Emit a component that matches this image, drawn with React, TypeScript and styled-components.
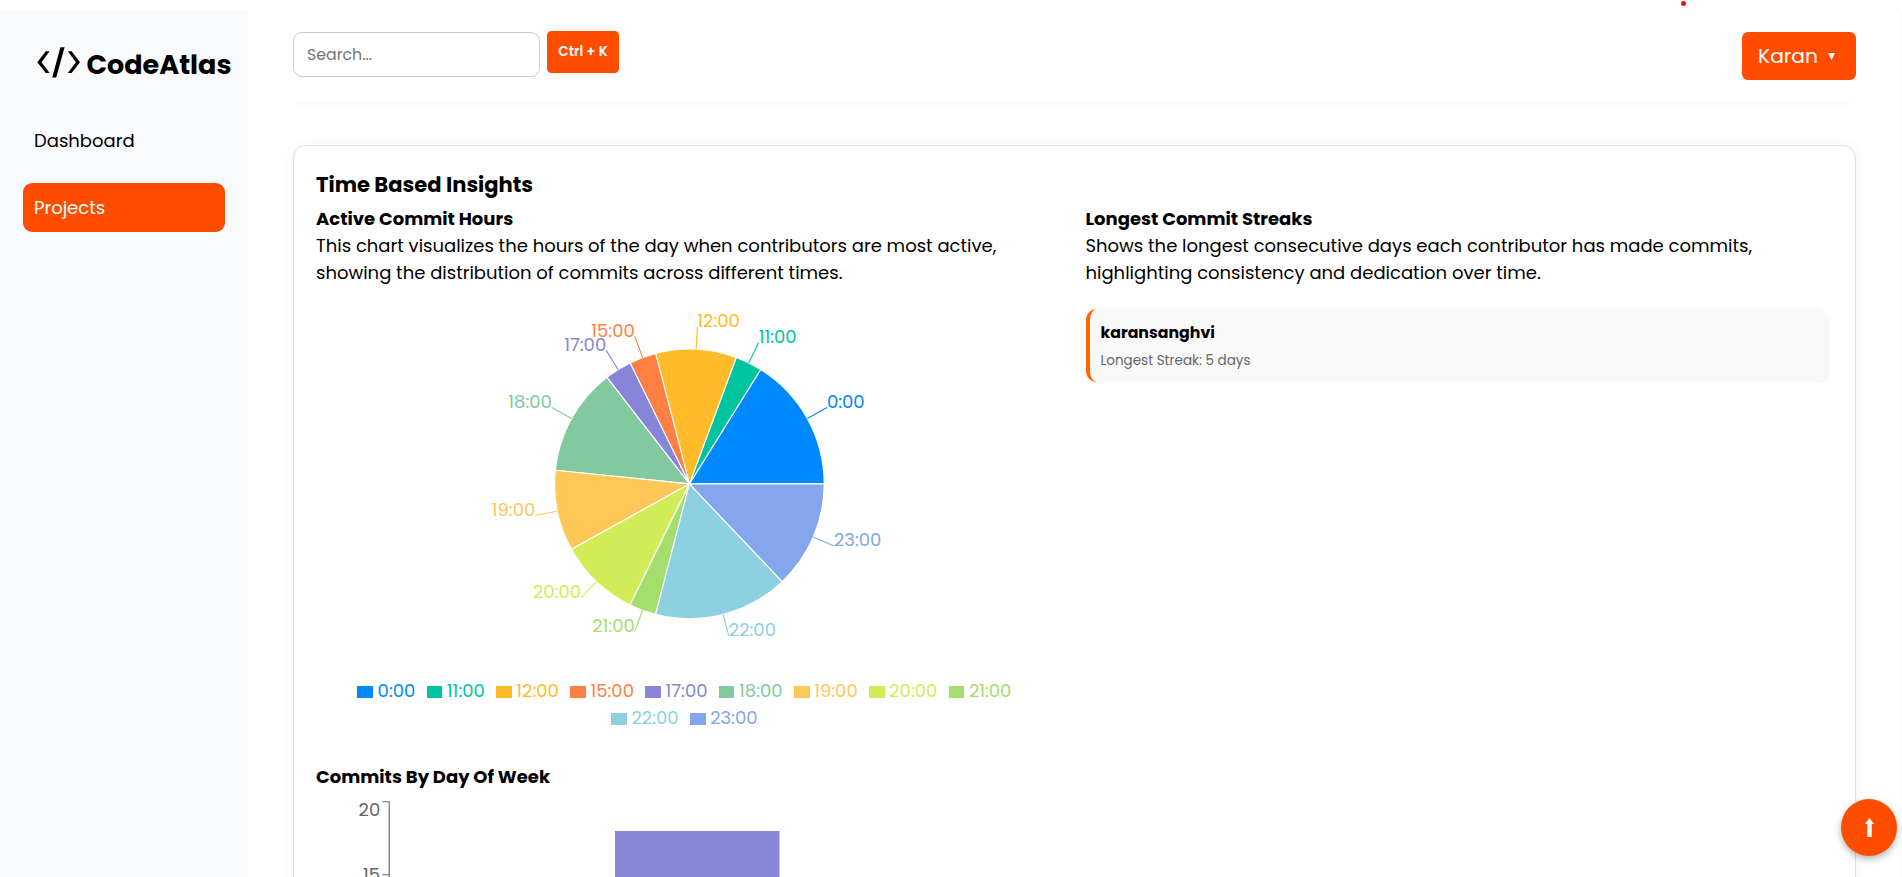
import React from "react";
import styled, { createGlobalStyle } from "styled-components";

const ACCENT = "#ff4d00";
const FONT = `"Poppins", "Inter", "Open Sans", sans-serif`;

const GlobalStyle = createGlobalStyle`
  * { box-sizing: border-box; margin: 0; padding: 0; }
  html, body { background: #fff; }
  body {
    height: 877px;
    overflow: hidden;
    font-family: ${FONT};
    font-size: 18px;
    line-height: 27px;
    color: #000;
  }
`;

const Shell = styled.div`
  display: flex;
  height: 877px;
  padding-top: 10px;
  overflow: hidden;
`;

const Sidebar = styled.aside`
  flex: none;
  width: 248px;
  background: #f9fafc;
  padding: 32px 0 0 23px;
`;

const Brand = styled.div`
  display: flex;
  height: 72px;
  margin-left: 14px;
`;

const BrandMark = styled.svg`
  flex: none;
  width: 44px;
  height: 32px;
  margin-top: 5px;
`;

const BrandName = styled.span`
  margin: 2px 0 0 5.5px;
  font-size: 27px;
  font-weight: 700;
  line-height: 42px;
`;

const Nav = styled.nav`
  display: flex;
  flex-direction: column;
  gap: 18px;
  margin-top: 2px;
`;

const NavItem = styled.a<{ $active?: boolean }>`
  display: block;
  width: 202px;
  height: 49px;
  padding: 0 11px;
  line-height: 49px;
  border-radius: 9px;
  color: ${(p) => (p.$active ? "#fff" : "#000")};
  background: ${(p) => (p.$active ? ACCENT : "transparent")};
`;

const Main = styled.main`
  flex: 1;
  min-width: 0;
  display: flex;
  flex-direction: column;
  padding: 0 45px;
  border-right: 1px solid #fafafa;
`;

const TopBar = styled.header`
  display: flex;
  align-items: flex-start;
  height: 92px;
  flex: none;
  padding-top: 20px;
  box-shadow: 0 6px 7px -6px rgba(0, 0, 0, 0.07);
`;

const SearchInput = styled.input`
  width: 247px;
  height: 45px;
  margin-top: 2px;
  padding: 0 13px;
  border: 1px solid #ccc;
  border-radius: 9px;
  font: 15.75px ${FONT};
  outline: none;
  &::placeholder { color: #757575; }
`;

const Shortcut = styled.kbd`
  width: 72px;
  height: 42.5px;
  margin: 0.5px 0 0 7px;
  border-radius: 4.5px;
  background: ${ACCENT};
  color: #fff;
  font: 600 13.5px/42px ${FONT};
  text-align: center;
`;

const UserButton = styled.button`
  display: flex;
  align-items: center;
  gap: 10px;
  width: 114px;
  height: 48px;
  margin: 2px 0 0 auto;
  padding: 0 0 0 16px;
  border: 0;
  border-radius: 6px;
  background: ${ACCENT};
  color: #fff;
  font: 20.25px/48px ${FONT};
`;

const Caret = styled.svg`
  width: 7px;
  height: 7px;
  margin-top: 1px;
`;

const Panel = styled.section`
  flex: none;
  height: 900px;
  margin-top: 43px;
  padding: 22px;
  border: 1px solid #e0e0e0;
  border-radius: 13px;
  background: #fff;
  box-shadow: 0 0 14px rgba(0, 0, 0, 0.045);
`;

const PanelTitle = styled.h2`
  height: 37px;
  font-size: 21.06px;
  line-height: 33px;
`;

const Columns = styled.div`
  display: grid;
  grid-template-columns: 747px 747px;
  gap: 22.5px;
`;

const Column = styled.div`
  display: flex;
  flex-direction: column;
`;

const Heading = styled.h3`
  font-size: 18px;
`;

const Blurb = styled.p`
  white-space: nowrap;
`;

const PieCanvas = styled.svg`
  display: block;
  width: 747px;
  height: 391px;
  overflow: visible;
`;

const Legend = styled.ul`
  display: flex;
  flex-wrap: wrap;
  justify-content: center;
  width: 720px;
  margin: 0 0 32px 14px;
  list-style: none;
`;

const LegendItem = styled.li<{ $color: string }>`
  display: flex;
  align-items: center;
  height: 27px;
  margin-right: 11.25px;
  color: ${(p) => p.$color};
  white-space: nowrap;
`;

const Swatch = styled.span`
  flex: none;
  width: 15.7px;
  height: 12px;
  margin: 3px 4.6px 0 0;
  background: currentColor;
`;

const BarCanvas = styled.svg`
  display: block;
  width: 747px;
  height: 240px;
`;

const StreakList = styled.div`
  height: 96px;
  padding: 23px 5.5px 0 0;
  overflow: hidden;
`;

const StreakCard = styled.article`
  height: 73px;
  padding: 12px 11px 0;
  border-left: 4px solid #ff6600;
  border-radius: 11px;
  background: #f9f9f9;
  box-shadow: 0 2px 6px rgba(0, 0, 0, 0.08);
`;

const StreakName = styled.h4`
  font-size: 15.75px;
  line-height: 24px;
`;

const StreakValue = styled.p`
  margin-top: 5px;
  font-size: 13.5px;
  line-height: 22px;
  color: #666;
`;

const ScrollTop = styled.button`
  position: fixed;
  right: 5px;
  bottom: 21px;
  display: grid;
  place-items: center;
  width: 56px;
  height: 57px;
  border: 0;
  border-radius: 50%;
  background: ${ACCENT};
  box-shadow: 0 3px 7px rgba(0, 0, 0, 0.3);
`;

const RecordDot = styled.span`
  position: fixed;
  top: 1px;
  left: 1680.5px;
  width: 5px;
  height: 5px;
  border-radius: 50%;
  background: #e8141c;
`;

type Hour = { label: string; commits: number; color: string };

const hours: Hour[] = [
  { label: "0:00", commits: 5, color: "#0088FE" },
  { label: "11:00", commits: 1, color: "#00C49F" },
  { label: "12:00", commits: 3, color: "#FFBB28" },
  { label: "15:00", commits: 1, color: "#FF8042" },
  { label: "17:00", commits: 1, color: "#8884D8" },
  { label: "18:00", commits: 4, color: "#82CA9D" },
  { label: "19:00", commits: 3, color: "#FFC658" },
  { label: "20:00", commits: 3, color: "#D0ED57" },
  { label: "21:00", commits: 1, color: "#A4DE6C" },
  { label: "22:00", commits: 5, color: "#8DD1E1" },
  { label: "23:00", commits: 4, color: "#83A6ED" },
];

const CX = 373.4;
const CY = 197.9;
const R = 134.8;
const LABEL_R = 157.3;

const point = (deg: number, r: number) => {
  const a = (deg * Math.PI) / 180;
  return [CX + r * Math.cos(a), CY - r * Math.sin(a)];
};

function HoursPie() {
  const total = hours.reduce((sum, h) => sum + h.commits, 0);
  let cursor = 0;
  const slices = hours.map((h) => {
    const start = cursor;
    cursor += (h.commits / total) * 360;
    return { ...h, start, end: cursor, mid: (start + cursor) / 2 };
  });
  return (
    <PieCanvas viewBox="0 0 747 391">
      {slices.map((s) => {
        const [x1, y1] = point(s.start, R);
        const [x2, y2] = point(s.end, R);
        return (
          <path
            key={s.label}
            d={`M${CX} ${CY}L${x1} ${y1}A${R} ${R} 0 0 0 ${x2} ${y2}Z`}
            fill={s.color}
            stroke="#fff"
            strokeWidth="1.125"
          />
        );
      })}
      {slices.map((s) => {
        const [x1, y1] = point(s.mid, R);
        const [x2, y2] = point(s.mid, LABEL_R);
        return (
          <g key={s.label}>
            <line x1={x1} y1={y1} x2={x2} y2={y2} stroke={s.color} strokeWidth="1.125" />
            <text
              x={x2}
              y={y2 + 0.3}
              fill={s.color}
              fontSize="18"
              textAnchor={x2 > CX ? "start" : "end"}
            >
              {s.label}
            </text>
          </g>
        );
      })}
    </PieCanvas>
  );
}

function WeekdayBars() {
  return (
    <BarCanvas viewBox="0 0 747 240">
      <path d="M66.5 11.8H73.2V240M66.5 84.8H73.2" fill="none" stroke="#666" strokeWidth="1.125" />
      <g fill="#666" fontSize="18" textAnchor="end">
        <text x="64.2" y="26">20</text>
        <text x="64.2" y="91.2">15</text>
      </g>
      <rect x="299" y="41" width="164.5" height="199" fill="#8884d8" />
    </BarCanvas>
  );
}

export default function App() {
  return (
    <>
      <GlobalStyle />
      <Shell>
        <Sidebar>
          <Brand>
            <BrandMark viewBox="0 0 44 32">
              <path d="M8.8 4.2H12.6L4.5 15.2L12.6 26H8.8L.3 15.2Z" />
              <path d="M34.6 4.2H30.8L38.9 15.2L30.8 26H34.6L43 15.2Z" />
              <path d="M23.4 .3H27.6L19.2 30.4H15.2Z" />
            </BrandMark>
            <BrandName>CodeAtlas</BrandName>
          </Brand>
          <Nav>
            <NavItem>Dashboard</NavItem>
            <NavItem $active>Projects</NavItem>
          </Nav>
        </Sidebar>
        <Main>
          <TopBar>
            <SearchInput placeholder="Search..." />
            <Shortcut>Ctrl + K</Shortcut>
            <UserButton>
              Karan
              <Caret viewBox="0 0 7 7">
                <path d="M0 0H7L3.5 7Z" fill="#fff" />
              </Caret>
            </UserButton>
          </TopBar>
          <Panel>
            <PanelTitle>Time Based Insights</PanelTitle>
            <Columns>
              <Column>
                <Heading>Active Commit Hours</Heading>
                <Blurb>
                  This chart visualizes the hours of the day when contributors are most active,
                  <br />
                  showing the distribution of commits across different times.
                </Blurb>
                <HoursPie />
                <Legend>
                  {hours.map((h) => (
                    <LegendItem key={h.label} $color={h.color}>
                      <Swatch />
                      {h.label}
                    </LegendItem>
                  ))}
                </Legend>
                <Heading>Commits By Day Of Week</Heading>
                <WeekdayBars />
              </Column>
              <Column>
                <Heading>Longest Commit Streaks</Heading>
                <Blurb>
                  Shows the longest consecutive days each contributor has made commits,
                  <br />
                  highlighting consistency and dedication over time.
                </Blurb>
                <StreakList>
                  <StreakCard>
                    <StreakName>karansanghvi</StreakName>
                    <StreakValue>Longest Streak: 5 days</StreakValue>
                  </StreakCard>
                </StreakList>
              </Column>
            </Columns>
          </Panel>
        </Main>
      </Shell>
      <ScrollTop aria-label="Back to top">
        <svg width="9" height="19" viewBox="0 0 9 19">
          <path d="M4.5 0L9 6H6.7V19H2.3V6H0Z" fill="#fff" />
        </svg>
      </ScrollTop>
      <RecordDot />
    </>
  );
}
